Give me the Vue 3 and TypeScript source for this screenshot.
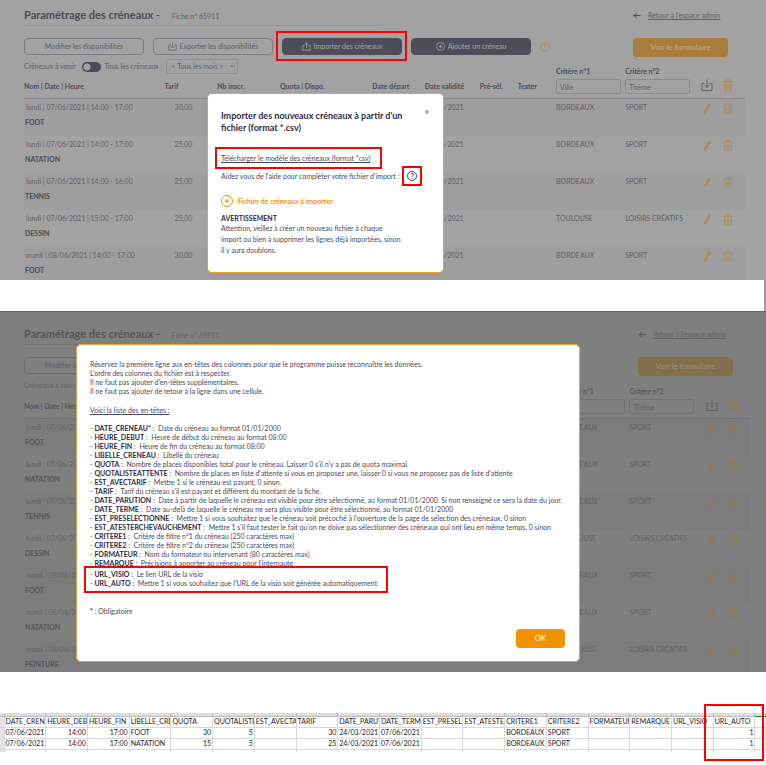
<script setup lang="ts">
import { ref } from 'vue'

interface Slot { when: string; name: string; price: string; city: string; theme: string }
interface Field { key: string; text: string }

const slots: Slot[] = [
  { when: 'lundi | 07/06/2021 | 14:00 - 17:00', name: 'FOOT', price: '30,00', city: 'BORDEAUX', theme: 'SPORT' },
  { when: 'lundi | 07/06/2021 | 14:00 - 17:00', name: 'NATATION', price: '25,00', city: 'BORDEAUX', theme: 'SPORT' },
  { when: 'lundi | 07/06/2021 | 14:00 - 16:00', name: 'TENNIS', price: '25,00', city: 'BORDEAUX', theme: 'SPORT' },
  { when: 'lundi | 07/06/2021 | 15:00 - 17:00', name: 'DESSIN', price: '25,00', city: 'TOULOUSE', theme: 'LOISIRS CRÉATIFS' },
  { when: 'mardi | 08/06/2021 | 14:00 - 17:00', name: 'FOOT', price: '30,00', city: 'BORDEAUX', theme: 'SPORT' },
  { when: 'mardi | 08/06/2021 | 14:00 - 17:00', name: 'NATATION', price: '25,00', city: 'BORDEAUX', theme: 'SPORT' },
  { when: 'mardi | 08/06/2021 | 14:00 - 17:00', name: 'PEINTURE', price: '25,00', city: 'TOULOUSE', theme: 'LOISIRS CRÉATIFS' },
]

const screens = [
  { id: 'import', rows: slots.slice(0, 5) },
  { id: 'help', rows: slots },
]

const fields: Field[] = [
  { key: 'DATE_CRENEAU*', text: 'Date du créneau au format 01/01/2000' },
  { key: 'HEURE_DEBUT', text: 'Heure de début du créneau au format 08:00' },
  { key: 'HEURE_FIN', text: 'Heure de fin du créneau au format 08:00' },
  { key: 'LIBELLE_CRENEAU', text: 'Libellé du créneau' },
  { key: 'QUOTA', text: "Nombre de places disponibles total pour le créneau. Laisser 0 s'il n'y a pas de quota maximal." },
  { key: 'QUOTALISTEATTENTE', text: "Nombre de places en liste d'attente si vous en proposez une, laisser 0 si vous ne proposez pas de liste d'attente" },
  { key: 'EST_AVECTARIF', text: 'Mettre 1 si le créneau est payant, 0 sinon.' },
  { key: 'TARIF', text: "Tarif du créneau s'il est payant et différent du montant de la fiche." },
  { key: 'DATE_PARUTION', text: 'Date à partir de laquelle le créneau est visible pour être sélectionné, au format 01/01/2000. Si non renseigné ce sera la date du jour.' },
  { key: 'DATE_TERME', text: 'Date au-delà de laquelle le créneau ne sera plus visible pour être sélectionné, au format 01/01/2000' },
  { key: 'EST_PRESELECTIONNE', text: "Mettre 1 si vous souhaitez que le créneau soit précoché à l'ouverture de la page de sélection des créneaux, 0 sinon" },
  { key: 'EST_ATESTERCHEVAUCHEMENT', text: "Mettre 1 s'il faut tester le fait qu'on ne doive pas sélectionner des créneaux qui ont lieu en même temps, 0 sinon" },
  { key: 'CRITERE1', text: 'Critère de filtre n°1 du créneau (250 caractères max)' },
  { key: 'CRITERE2', text: 'Critère de filtre n°2 du créneau (250 caractères max)' },
  { key: 'FORMATEUR', text: 'Nom du formateur ou intervenant (80 caractères max)' },
  { key: 'REMARQUE', text: "Précisions à apporter au créneau pour l'internaute" },
]
const urlFields: Field[] = [
  { key: 'URL_VISIO', text: 'Le lien URL de la visio' },
  { key: 'URL_AUTO', text: "Mettre 1 si vous souhaitez que l'URL de la visio soit générée automatiquement" },
]

const sheetHead = ['DATE_CRENEAU', 'HEURE_DEBUT', 'HEURE_FIN', 'LIBELLE_CRENEAU', 'QUOTA', 'QUOTALISTEATTENTE', 'EST_AVECTARIF', 'TARIF', 'DATE_PARUTION', 'DATE_TERME', 'EST_PRESELECTIONNE', 'EST_ATESTER', 'CRITERE1', 'CRITERE2', 'FORMATEUR', 'REMARQUE', 'URL_VISIO', 'URL_AUTO']
const sheetRows: string[][] = [
  ['07/06/2021', '14:00', '17:00', 'FOOT', '30', '5', '', '30', '24/03/2021', '07/06/2021', '', '', 'BORDEAUX', 'SPORT', '', '', '', '1'],
  ['07/06/2021', '14:00', '17:00', 'NATATION', '15', '5', '', '25', '24/03/2021', '07/06/2021', '', '', 'BORDEAUX', 'SPORT', '', '', '', '1'],
]
const isNumeric = (v: string): boolean => /^[\d:/]+$/.test(v)

const showAll = ref(false)
</script>

<template>
  <main class="doc">
    <template v-for="s in screens" :key="s.id">
      <section class="screen" :class="s.id">
        <header class="top">
          <div class="heading">
            <h1>Paramétrage des créneaux -</h1>
            <span>Fiche n° 65911</span>
          </div>
          <a class="back" href="#">
            <svg viewBox="0 0 16 14" class="arrow"><path d="M15 7H2M7.500 1.500L2 7l5.500 5.500" /></svg>
            <span>Retour à l'espace admin</span>
          </a>
        </header>

        <div class="actions">
          <div class="group">
            <button type="button" class="btn">Modifier les disponibilités</button>
            <button type="button" class="btn">
              <svg viewBox="0 0 18 18"><path d="M5 6H1.500v10.500h15V6H13M9 1v11M5.500 8.500L9 12l3.500-3.500" /></svg>
              Exporter les disponibilités
            </button>
            <button type="button" class="btn dark">
              <svg viewBox="0 0 18 18"><path d="M5 7H1.500v9.500h15V7H13M9 12V1.500M5.500 5L9 1.500 12.500 5" /></svg>
              Importer des créneaux
              <i v-if="s.id === 'import'" class="mark around-button"></i>
            </button>
            <button type="button" class="btn dark">
              <svg viewBox="0 0 18 18"><circle cx="9" cy="9" r="8" /><path d="M9 5v8M5 9h8" /></svg>
              Ajouter un créneau
            </button>
            <button type="button" class="round amber" aria-label="Aide">?</button>
          </div>
          <button type="button" class="view">Voir le formulaire</button>
        </div>

        <div class="filters">
          <label :for="'all-' + s.id">Créneaux à venir</label>
          <input :id="'all-' + s.id" v-model="showAll" type="checkbox" class="switch" />
          <label :for="'all-' + s.id">Tous les créneaux</label>
          <span class="picker">
            <select aria-label="Mois"><option>&lt; Tous les mois &gt;</option></select>
            <svg viewBox="0 0 10 6"><path d="M1 1l4 4 4-4" /></svg>
          </span>
        </div>

        <table class="slots">
          <colgroup>
            <col class="c-name" /><col class="c-price" /><col class="c-count" /><col class="c-quota" />
            <col class="c-start" /><col class="c-valid" /><col class="c-small" /><col class="c-small" />
            <col class="c-crit" /><col class="c-theme" /><col class="c-edit" /><col />
          </colgroup>
          <thead>
            <tr>
              <th>Nom | Date | Heure</th><th>Tarif</th><th>Nb inscr.</th><th>Quota | Dispo.</th>
              <th>Date départ</th><th>Date validité</th><th>Pré-sél.</th><th>Tester</th>
              <th class="crit"><label :for="'c1-' + s.id">Critère n°1</label><input :id="'c1-' + s.id" type="text" placeholder="Ville" /></th>
              <th class="crit theme"><label :for="'c2-' + s.id">Critère n°2</label><input :id="'c2-' + s.id" type="text" placeholder="Thème" /></th>
              <th class="tool"><button type="button" aria-label="Exporter">
                <svg class="big grey" viewBox="0 0 18 18"><path d="M5 6H1.500v10.500h15V6H13M9 0v12M5.500 8.500L9 12l3.500-3.500" /></svg>
              </button></th>
              <th class="tool trash"><button type="button" aria-label="Tout supprimer">
                <svg class="big gold" viewBox="0 0 18 19"><path d="M1 4h16M6 4V1h6v3M3 4l1.500 14h9L15 4M6.500 7v8M9 7v8M11.500 7v8" /></svg>
              </button></th>
            </tr>
          </thead>
          <tbody>
            <tr v-for="(r, i) in s.rows" :key="i">
              <td><span class="when">{{ r.when }}</span><strong>{{ r.name }}</strong></td>
              <td class="price">{{ r.price }}</td><td></td><td></td><td></td>
              <td>07/06/2021</td><td></td><td></td>
              <td>{{ r.city }}</td><td>{{ r.theme }}</td>
              <td class="tool"><button type="button" aria-label="Modifier">
                <svg class="small gold pen" viewBox="0 0 18 20"><path d="M4 19l1-5L12.500 1.500l3 2L8 16z" /></svg>
              </button></td>
              <td class="tool trash"><button type="button" aria-label="Supprimer">
                <svg class="small gold" viewBox="0 0 18 20"><path d="M1 4h16M6 4V1h6v3M3 5v13.500h12V5M7 9v6M9 8v8M11 9v6" /></svg>
              </button></td>
            </tr>
          </tbody>
        </table>

        <div v-if="s.id === 'import'" class="modal import-modal" role="dialog" aria-labelledby="import-title">
          <div class="modal-head">
            <h2 id="import-title">Importer des nouveaux créneaux à partir d'un fichier (format *.csv)</h2>
            <button type="button" class="close" aria-label="Fermer">x</button>
          </div>
          <a class="template" href="#">Télécharger le modèle des créneaux (format *csv)<i class="mark around-link"></i></a>
          <p class="hint">
            Aidez vous de l'aide pour compléter votre fichier d’import :
            <button type="button" class="round" aria-label="Aide">?<i class="mark around-help"></i></button>
          </p>
          <button type="button" class="upload">
            <svg viewBox="0 0 24 24"><circle cx="12" cy="12" r="11" /><path d="M12 7.500v9M7.500 12h9" /></svg>
            Fichier de créneaux à importer
          </button>
          <strong class="warn">AVERTISSEMENT</strong>
          <p class="warn-text">Attention, veillez à créer un nouveau fichier à chaque import ou bien à supprimer les lignes déjà importées, sinon il y aura doublons.</p>
        </div>

        <div v-else class="modal help-modal" role="dialog" aria-label="Aide">
          <p>
            Réservez la première ligne aux en-têtes des colonnes pour que le programme puisse reconnaître les données.<br />
            L'ordre des colonnes du fichier est à respecter.<br />
            Il ne faut pas ajouter d'en-têtes supplémentaires.<br />
            Il ne faut pas ajouter de retour à la ligne dans une cellule.
          </p>
          <p class="list-title">Voici la liste des en-têtes :</p>
          <ul>
            <li v-for="f in fields" :key="f.key">- <b>{{ f.key }}</b> :&nbsp; {{ f.text }}</li>
          </ul>
          <div class="urls">
            <ul>
              <li v-for="f in urlFields" :key="f.key">- <b>{{ f.key }}</b> :&nbsp; {{ f.text }}</li>
            </ul>
            <i class="mark around-urls"></i>
          </div>
          <p class="required"><b>*</b> : Obligatoire</p>
          <button type="button" class="ok">OK</button>
        </div>
      </section>
      <div v-if="s.id === 'import'" class="divider"></div>
    </template>

    <section class="sheet">
      <table>
        <colgroup><col class="gutter" /><col v-for="h in sheetHead" :key="h" class="cell" /><col /></colgroup>
        <thead>
          <tr class="edge"><td v-for="n in 19" :key="n"></td><td class="green"></td></tr>
          <tr><td></td><th v-for="h in sheetHead" :key="h">{{ h }}</th><td></td></tr>
        </thead>
        <tbody>
          <tr v-for="(r, i) in sheetRows" :key="i">
            <td></td><td v-for="(v, j) in r" :key="j" :class="{ num: isNumeric(v) }">{{ v }}</td><td></td>
          </tr>
          <tr class="rest"><td v-for="n in 20" :key="n"></td></tr>
        </tbody>
      </table>
      <i class="mark around-column"></i>
    </section>
  </main>
</template>

<style>
body { background: #fff; }
</style>

<style scoped>
* { box-sizing: border-box; }
.doc { font: 7px/9px Lato, "Noto Sans", sans-serif; color: #4a4860; }
button, input, select { font: inherit; color: inherit; margin: 0; }
button { background: none; border: 0; padding: 0; }
svg { fill: none; stroke: currentColor; flex: none; }
h1, h2, p, ul { margin: 0; padding: 0; }

.mark { position: absolute; border: 2px solid #f00; pointer-events: none; }

.screen {
  --bg: #a2a2a2; --stripe: #9e9e9e; --text: #5e5d66; --strong: #4b4a55; --line: #7c7c84;
  --dark: #4e4c59; --on-dark: #a7a7aa; --gold: #b08a50; --view: #a77c3c; --on-view: #c3ae8e;
  position: relative; overflow: hidden; padding: 7px 21px 0 24px;
  background: var(--bg); color: var(--text); max-height: 280px;
}
.screen.help {
  --bg: #7f7f7f; --stripe: #7c7c7c; --text: #616166; --strong: #545358; --line: #6b6b6f;
  --dark: #5b5a60; --on-dark: #858588; --gold: #917a52; --view: #82704d; --on-view: #979080;
  max-height: 361px; padding: 14px 16px 0 24px; border-top: 1px solid #686868;
}

.top { display: flex; justify-content: space-between; align-items: flex-start; height: 19px; }
.heading { display: flex; align-items: baseline; gap: 12px; width: 358px; height: 19px; line-height: 15px; border-bottom: 1px solid #95959a; }
.help .heading { border-color: #777; }
.heading h1 { font-size: 11px; line-height: 15px; font-weight: 700; color: var(--strong); }
.back { display: flex; align-items: center; gap: 7px; width: 112px; height: 17px; color: var(--text); }
.back span { text-decoration: underline; }
.arrow { width: 8px; height: 7px; stroke-width: 2; color: var(--strong); }

.actions { display: flex; justify-content: space-between; align-items: flex-start; height: 20px; margin-top: 12px; }
.group { display: flex; align-items: center; gap: 9px; }
.btn {
  position: relative; display: flex; align-items: center; justify-content: center; gap: 3px;
  width: 120px; height: 17px; border: 1px solid var(--line); border-radius: 4px; white-space: nowrap;
}
.btn svg { width: 9px; height: 9px; stroke-width: 1.5; }
.dark { background: var(--dark); color: var(--on-dark); border-color: var(--dark); }
.around-button { inset: -8px -6px -7px -7px; }
.round {
  position: relative; display: inline-flex; align-items: center; justify-content: center; width: 10px; height: 10px;
  border: 1px solid currentColor; border-radius: 50%; font-weight: 700; line-height: 8px;
}
.amber { color: var(--gold); }
.view { width: 95px; height: 19px; margin-right: 17px; border-radius: 4px; background: var(--view); color: var(--on-view); font-size: 8px; }

.filters { display: flex; align-items: center; height: 15px; margin: 1px 0 -7px; }
.help .filters { margin-bottom: -6px; }
.switch { appearance: none; width: 19px; height: 10px; margin: 0 3px 0 7px; border-radius: 5px; background: radial-gradient(circle at 5px 5px, var(--bg) 3px, transparent 4px) var(--dark); }
.picker { position: relative; display: flex; margin-left: 7px; }
.picker select { appearance: none; width: 72px; height: 15px; padding: 0 5px; border: 1px solid #8e8e93; border-radius: 2px; background: transparent; }
.help .picker select { border-color: #717174; }
.picker svg { position: absolute; right: 3px; top: 5px; width: 5px; height: 4px; stroke-width: 2; }

.slots { width: 100%; table-layout: fixed; border-collapse: collapse; }
.c-name { width: 19.500%; }
.c-price { width: 7.300%; }
.c-count { width: 8.700%; }
.c-quota { width: 12.800%; }
.c-start { width: 7.300%; }
.c-valid { width: 7.600%; }
.c-small { width: 5.300%; }
.c-crit { width: 9.600%; }
.c-theme { width: 10.200%; }
.c-edit { width: 2.400%; }
.slots th { height: 31px; padding: 0 0 7px; vertical-align: bottom; text-align: left; color: var(--strong); border-bottom: 1px solid #88888c; white-space: nowrap; }
.help .slots th { border-color: #6f6f72; }
.slots .crit { padding: 0 4px 4px 0; }
.slots .theme { padding-right: 9px; }
.crit label { display: block; margin-bottom: 3px; }
.crit input { display: block; width: 100%; height: 15px; padding: 0 3px; border: 1px solid #8b8b90; border-radius: 2px; background: transparent; font-weight: 400; }
.help .crit input { border-color: #717174; }
.crit input::placeholder { color: var(--text); opacity: 1; }
.slots td { height: 37px; padding: 4px 0 0; vertical-align: top; white-space: nowrap; }
.slots tbody tr:nth-child(odd) { background: var(--stripe); }
.slots td strong { display: block; margin: 6px 0 0 1px; color: var(--strong); }
.when { padding-left: 2px; }
.slots .price { padding-left: 10px; }
.slots .tool { padding-top: 4px; text-align: center; overflow: visible; }
.slots .trash { padding-left: 6px; text-align: left; }
.slots th.tool { padding-bottom: 4px; }
.slots td.trash { padding-left: 7px; }
.tool button { display: inline-flex; }
.big { width: 12px; height: 13px; stroke-width: 1.5; }
.small { width: 10px; height: 11px; stroke-width: 1.7; }
.grey { color: var(--text); }
.gold { color: var(--gold); }
.pen path { fill: currentColor; }

.modal { position: absolute; background: #fff; border: 1px solid #e9a13b; border-radius: 5px; color: #4a4860; }
.import-modal { left: 207px; top: 93px; width: 237px; padding: 16px 13px 16px; }
.modal-head { display: flex; align-items: flex-start; justify-content: space-between; }
.modal-head h2 { width: 185px; font-size: 9px; line-height: 12px; color: #2d2b45; }
.close { width: 6px; line-height: 9px; margin-top: -3px; }
.template { position: relative; display: inline-block; margin-top: 20px; color: inherit; text-decoration: underline; }
.around-link { inset: -7px -12px -6px -6px; }
.hint { display: flex; align-items: center; gap: 8px; margin-top: 8px; white-space: nowrap; }
.around-help { inset: -6px; }
.upload { display: flex; align-items: center; gap: 5px; margin-top: 14px; color: #f39200; font-weight: 700; }
.upload svg { width: 12px; height: 12px; stroke-width: 2; }
.warn { display: block; margin-top: 7px; color: #2d2b45; }
.warn-text { width: 181px; line-height: 11px; }

.help-modal { left: 76px; top: 32px; width: 504px; padding: 15px 14px 13px 13px; display: flex; flex-direction: column; white-space: nowrap; }
.help-modal ul { list-style: none; }
.help-modal b { color: #2d2b45; }
.list-title { margin: 10px 0 9px; text-decoration: underline; }
.urls { position: relative; width: 298px; margin-top: 2px; }
.help-modal .around-urls { inset: -4px 0 -5px -6px; }
.required { margin-top: 19px; }
.ok { align-self: flex-end; width: 49px; height: 19px; margin-top: 13px; border-radius: 4px; background: #f39200; color: #fff; font-size: 8px; }

.divider { height: 31px; border-right: 2px solid #9b9b9b; }

.sheet { position: relative; padding: 41px 0 14px; color: #222; }
.sheet table { width: 100%; table-layout: fixed; border-collapse: collapse; }
.gutter { width: 4px; }
.cell { width: 5.450%; }
.sheet th, .sheet td { height: 11px; padding: 0 1px; border: 1px solid #d9d9d9; border-width: 0 1px 1px 0; line-height: 9px; font-weight: 400; text-align: left; white-space: nowrap; overflow: hidden; }
.sheet th { padding-right: 0; }
.sheet td:first-child { background: #e3e3e3; padding: 0; }
.sheet .edge td { height: 3px; background: #dedede; border-color: #bcbcbc; }
.sheet .edge .green { border-bottom-color: #217346; }
.sheet .rest td { height: 3px; border-bottom: 0; }
.sheet .num { text-align: right; }
.around-column { right: 2px; top: 32px; width: 60px; height: 57px; }
</style>
